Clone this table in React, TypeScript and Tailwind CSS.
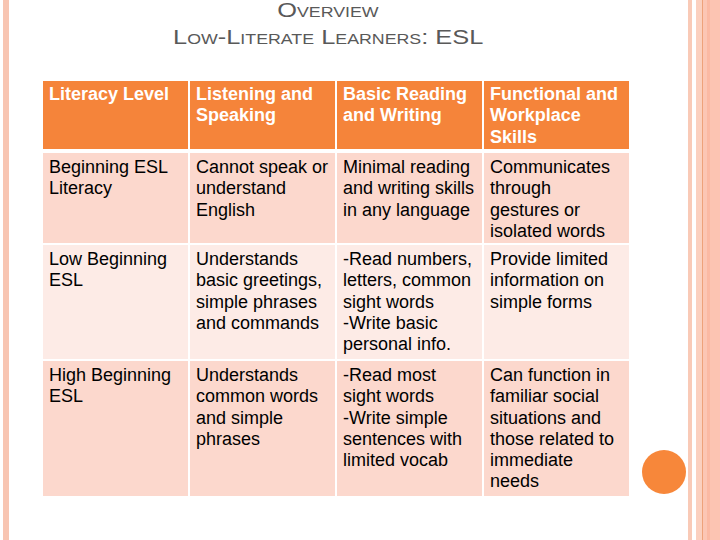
const HEADERS = [
  "Literacy Level",
  "Listening and Speaking",
  "Basic Reading and Writing",
  "Functional and Workplace Skills",
];

const ROWS = [
  {
    height: "h-[90px]",
    bg: "bg-[#fcd8cd]",
    cells: [
      ["Beginning ESL", "Literacy"],
      ["Cannot speak or", "understand", "English"],
      ["Minimal reading", "and writing skills", "in any language"],
      ["Communicates", "through", "gestures or", "isolated words"],
    ],
  },
  {
    height: "h-[114px]",
    bg: "bg-[#fdebe6]",
    cells: [
      ["Low Beginning", "ESL"],
      ["Understands", "basic greetings,", "simple phrases", "and commands"],
      ["-Read numbers,", "letters, common", "sight words", "-Write basic", "personal info."],
      ["Provide limited", "information on", "simple forms"],
    ],
  },
  {
    height: "h-[135px]",
    bg: "bg-[#fcd8cd]",
    cells: [
      ["High Beginning", "ESL"],
      ["Understands", "common words", "and simple", "phrases"],
      ["-Read most", "sight words", "-Write simple", "sentences with", "limited vocab"],
      ["Can function in", "familiar social", "situations and", "those related to", "immediate", "needs"],
    ],
  },
];

function Lines({ lines }: { lines: string[] }) {
  return (
    <>
      {lines.map((line, i) => (
        <span key={i} className="block whitespace-nowrap">
          {line}
        </span>
      ))}
    </>
  );
}

export default function App() {
  return (
    <div className="relative flex h-[540px] w-[720px] overflow-hidden bg-white font-['Liberation_Sans',Arial,sans-serif]">
      {/* left rule */}
      <div className="ml-[3px] w-[6px] bg-[#f8c5b2]" />

      <div className="flex w-[679px] flex-col">
        <div className="-mt-[3px] w-[638px] text-center text-[20px] leading-[27px] text-[#595959] [font-variant:small-caps]">
          <div>
            <span className="inline-block scale-x-[1.27]">Overview</span>
          </div>
          <div>
            <span className="inline-block scale-x-[1.27]">Low-Literate Learners: ESL</span>
          </div>
        </div>

        <div className="ml-[34px] mt-[30px] flex flex-col text-[18px] leading-[21.3px]">
          <div className="grid h-[68px] grid-cols-[145px_145px_145px_145px] gap-x-[2px]">
            {HEADERS.map((h) => (
              <div key={h} className="bg-[#f5843a] pl-[6px] pr-[4px] pt-[3px] font-bold text-white">
                {h}
              </div>
            ))}
          </div>

          {ROWS.map((row, r) => (
            <div
              key={r}
              className={`grid grid-cols-[145px_145px_145px_145px] gap-x-[2px] ${row.height} ${
                r === 0 ? "mt-[4px]" : "mt-[2px]"
              }`}
            >
              {row.cells.map((cell, c) => (
                <div key={c} className={`${row.bg} pl-[6px] pr-[4px] pt-[4px] text-black`}>
                  <Lines lines={cell} />
                </div>
              ))}
            </div>
          ))}
        </div>
      </div>

      {/* right border stripes */}
      <div className="w-[4px] bg-[#f9cab7]" />
      <div className="w-[4px] bg-white" />
      <div className="w-[6px] bg-[#fbd0bf]" />
      <div className="w-[1px] bg-[#eea27a]" />
      <div className="w-[4px] bg-[#fcc6b4]" />
      <div className="w-[3px] bg-[#fbb9a3]" />
      <div className="flex-1 bg-[#fcc4b2]" />

      {/* orange dot */}
      <div className="absolute left-[642px] top-[450px] h-[44px] w-[44px] rounded-full bg-[#f7873a]" />
    </div>
  );
}
